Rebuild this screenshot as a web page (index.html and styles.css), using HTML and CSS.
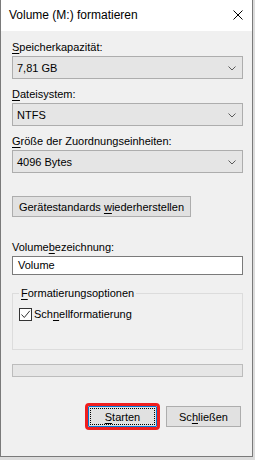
FILE: index.html
```html
<!DOCTYPE html>
<html lang="de">
<head>
  <meta charset="UTF-8">
  <title>Volume (M:) formatieren</title>
  <link rel="stylesheet" href="styles.css">
</head>
<body>
  <div class="window">
    <div class="titlebar">
      <span class="title">Volume (M:) formatieren</span>
      <svg class="close" width="10" height="10" viewBox="0 0 10 10">
        <path d="M0.5 0.5 L9.5 9.5 M9.5 0.5 L0.5 9.5" stroke="#000" stroke-width="1" fill="none"/>
      </svg>
    </div>

    <div class="panel">
      <div class="label"><u>S</u>peicherkapazität:</div>
      <div class="combo">
        <span>7,81 GB</span>
        <svg class="chevron" width="8" height="5" viewBox="0 0 8 5"><path d="M0.5 0.5 L4 4 L7.5 0.5" stroke="#5a5a5a" fill="none"/></svg>
      </div>

      <div class="label"><u>D</u>ateisystem:</div>
      <div class="combo">
        <span>NTFS</span>
        <svg class="chevron" width="8" height="5" viewBox="0 0 8 5"><path d="M0.5 0.5 L4 4 L7.5 0.5" stroke="#5a5a5a" fill="none"/></svg>
      </div>

      <div class="label"><u>G</u>röße der Zuordnungseinheiten:</div>
      <div class="combo">
        <span>4096 Bytes</span>
        <svg class="chevron" width="8" height="5" viewBox="0 0 8 5"><path d="M0.5 0.5 L4 4 L7.5 0.5" stroke="#5a5a5a" fill="none"/></svg>
      </div>

      <div class="btn btn-reset"><span>Gerätestandards <u>w</u>iederherstellen</span></div>

      <div class="label label-volume">Volume<u>b</u>ezeichnung:</div>
      <div class="textbox">Volume</div>

      <fieldset class="group">
        <legend><u>F</u>ormatierungsoptionen</legend>
        <div class="check-row">
          <span class="checkbox">
            <svg width="11" height="11" viewBox="0 0 11 11"><path d="M1.5 5.5 L4.3 8.5 L9.8 1.8" stroke="#333" stroke-width="1" fill="none"/></svg>
          </span>
          <span>Sch<u>n</u>ellformatierung</span>
        </div>
      </fieldset>

      <div class="progress"></div>

      <div class="actions">
        <div class="btn btn-default"><span class="focus"><span><u>S</u>tarten</span></span></div>
        <div class="btn btn-close"><span>Sc<u>h</u>ließen</span></div>
      </div>
    </div>
  </div>
</body>
</html>
```

FILE: styles.css
```css
html {
  box-sizing: border-box;
}

*, *:before, *:after {
  box-sizing: inherit;
}

body {
  margin: 0;
  background: #dcdcdc;
  font-family: "Liberation Sans", Arial, sans-serif;
  font-size: 11px;
  color: #000;
}

u {
  text-decoration: underline;
  text-underline-offset: 2px;
}

.window {
  width: 253px;
  height: 457px;
  display: flex;
  flex-direction: column;
  background: #f0f0f0;
  border: 1px solid #7a7a7a;
  border-top: none;
}

.titlebar {
  height: 31px;
  flex: none;
  display: flex;
  align-items: center;
  justify-content: space-between;
  padding: 0 9px 1px 8px;
  background: #fff;
}

.title {
  font-size: 12px;
}

.close {
  display: block;
}

.panel {
  flex: 1;
  display: flex;
  flex-direction: column;
  padding: 8px 9px 0 11px;
}

.label {
  height: 17px;
  line-height: 15px;
  padding-top: 1px;
}

.combo {
  height: 23px;
  display: flex;
  align-items: center;
  justify-content: space-between;
  padding: 0 6px 0 4px;
  margin-bottom: 7px;
  background: #e5e5e5;
  border: 1px solid #adadad;
}

.chevron {
  display: block;
  margin-top: 1px;
}

.btn {
  height: 21px;
  display: flex;
  align-items: center;
  justify-content: center;
  background: #e1e1e1;
  border: 1px solid #adadad;
}

.btn-reset {
  width: 179px;
  margin-top: 16px;
}

.label-volume {
  margin-top: 22px;
}

.textbox {
  height: 19px;
  line-height: 17px;
  padding-left: 5px;
  background: #fff;
  border: 1px solid #7a7a7a;
}

.group {
  height: 64px;
  margin: 11px 0 0;
  padding: 7px 6px 0;
  border: 1px solid #dcdcdc;
  min-width: 0;
}

.group legend {
  padding: 0 2px;
  line-height: 15px;
}

.check-row {
  display: flex;
  align-items: center;
  gap: 2px;
  line-height: 15px;
  margin-top: -1px;
}

.checkbox {
  width: 13px;
  height: 13px;
  display: flex;
  align-items: center;
  justify-content: center;
  background: #fff;
  border: 1px solid #333;
}

.checkbox svg {
  display: block;
}

.progress {
  height: 13px;
  margin-top: 14px;
  background: #e6e6e6;
  border: 1px solid #bcbcbc;
}

.actions {
  display: flex;
  justify-content: flex-end;
  gap: 9px;
  margin-top: 29px;
  padding-right: 2px;
}

.btn-default {
  width: 69px;
  padding: 1px;
  border-color: #0078d7;
  outline: 3px solid #f01e1e;
  border-radius: 1px;
}

.focus {
  flex: 1;
  align-self: stretch;
  display: flex;
  align-items: center;
  justify-content: center;
  border: 1px dotted #000;
}

.btn-close {
  width: 75px;
}
```
